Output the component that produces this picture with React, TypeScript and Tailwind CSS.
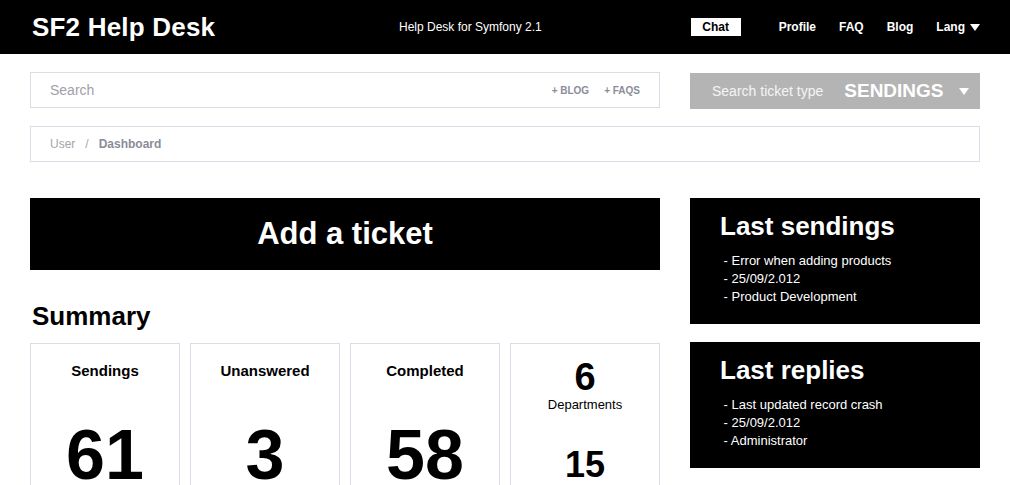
const font = { fontFamily: '"Liberation Sans", Arial, sans-serif' };

function Caret({ className }: { className: string }) {
  return (
    <svg viewBox="0 0 10 7" className={className} fill="currentColor">
      <path d="M0 0h10L5 7z" />
    </svg>
  );
}

function Header() {
  return (
    <header className="h-[54px] bg-black text-white">
      <div className="mx-[30px] flex h-full items-center">
        <div className="w-[369px] pl-[2px] text-[26px] font-bold tracking-[0.2px]">SF2 Help Desk</div>
        <div className="text-[12px]">Help Desk for Symfony 2.1</div>
        <nav className="ml-auto flex items-center gap-[23px] text-[12px] font-bold">
          <span className="mr-[15px] flex h-[18px] w-[50px] items-center justify-center bg-white text-black">Chat</span>
          <span>Profile</span>
          <span>FAQ</span>
          <span>Blog</span>
          <span className="flex items-center gap-[5px]">
            Lang <Caret className="h-[7px] w-[10px]" />
          </span>
        </nav>
      </div>
    </header>
  );
}

function Stat({ label, value }: { label: string; value: string }) {
  return (
    <div className="flex h-[160px] flex-col items-center border border-[#dcdce6] pt-[18px]">
      <div className="text-[15px] font-bold leading-[18px]">{label}</div>
      <div className="mt-[40px] text-[70px] font-bold leading-[70px]">{value}</div>
    </div>
  );
}

function InfoBox({ title, items }: { title: string; items: string[] }) {
  return (
    <div className="h-[126px] bg-black px-[30px] pt-[13px] text-white">
      <h3 className="text-[26px] font-bold leading-[30px]">{title}</h3>
      <ul className="mt-[11px] text-[13px] leading-[18px]">
        {items.map((i) => (
          <li key={i}>&nbsp;- {i}</li>
        ))}
      </ul>
    </div>
  );
}

export default function App() {
  return (
    <div className="min-h-screen overflow-hidden bg-white text-black" style={font}>
      <Header />
      <div className="mx-[30px]">
        <div className="mt-[18px] flex items-start gap-[30px]">
          <div className="flex h-[36px] w-[630px] items-center border border-[#dcdce6] px-[19px]">
            <span className="text-[14px] text-[#a0a0a8]">Search</span>
            <span className="ml-auto text-[10px] font-bold text-[#8c8c9a]">+ BLOG</span>
            <span className="ml-[15px] text-[10px] font-bold text-[#8c8c9a]">+ FAQS</span>
          </div>
          <div className="mt-[1px] flex h-[36px] flex-1 items-center bg-[#b4b4b4] pl-[22px] pr-[11px] text-white">
            <span className="text-[14px] text-[#f4f4f4]">Search ticket type</span>
            <span className="ml-[21px] text-[19px] font-bold">SENDINGS</span>
            <Caret className="ml-auto h-[7px] w-[10px]" />
          </div>
        </div>

        <div className="mt-[17px] flex h-[36px] items-center gap-[10px] border border-[#dcdce6] px-[19px] text-[12px]">
          <span className="text-[#a5a5ad]">User</span>
          <span className="text-[#a5a5ad]">/</span>
          <span className="font-bold text-[#8c8c98]">Dashboard</span>
        </div>

        <div className="mt-[36px] flex gap-[30px]">
          <div className="w-[630px]">
            <button className="flex h-[72px] w-full items-center justify-center bg-black text-[31px] font-bold text-white">
              Add a ticket
            </button>
            <h2 className="mt-[31px] pl-[2px] text-[26px] font-bold leading-[30px]">Summary</h2>
            <div className="mt-[12px] grid grid-cols-4 gap-[10px]">
              <Stat label="Sendings" value="61" />
              <Stat label="Unanswered" value="3" />
              <Stat label="Completed" value="58" />
              <div className="flex h-[160px] flex-col items-center border border-[#dcdce6] pt-[13px]">
                <div className="text-[38px] font-bold leading-[40px]">6</div>
                <div className="-mt-[1px] text-[13px] leading-[18px]">Departments</div>
                <div className="mt-[31px] text-[36px] font-bold leading-[40px]">15</div>
              </div>
            </div>
          </div>
          <div className="flex flex-1 flex-col gap-[18px]">
            <InfoBox title="Last sendings" items={['Error when adding products', '25/09/2.012', 'Product Development']} />
            <InfoBox title="Last replies" items={['Last updated record crash', '25/09/2.012', 'Administrator']} />
          </div>
        </div>
      </div>
    </div>
  );
}
